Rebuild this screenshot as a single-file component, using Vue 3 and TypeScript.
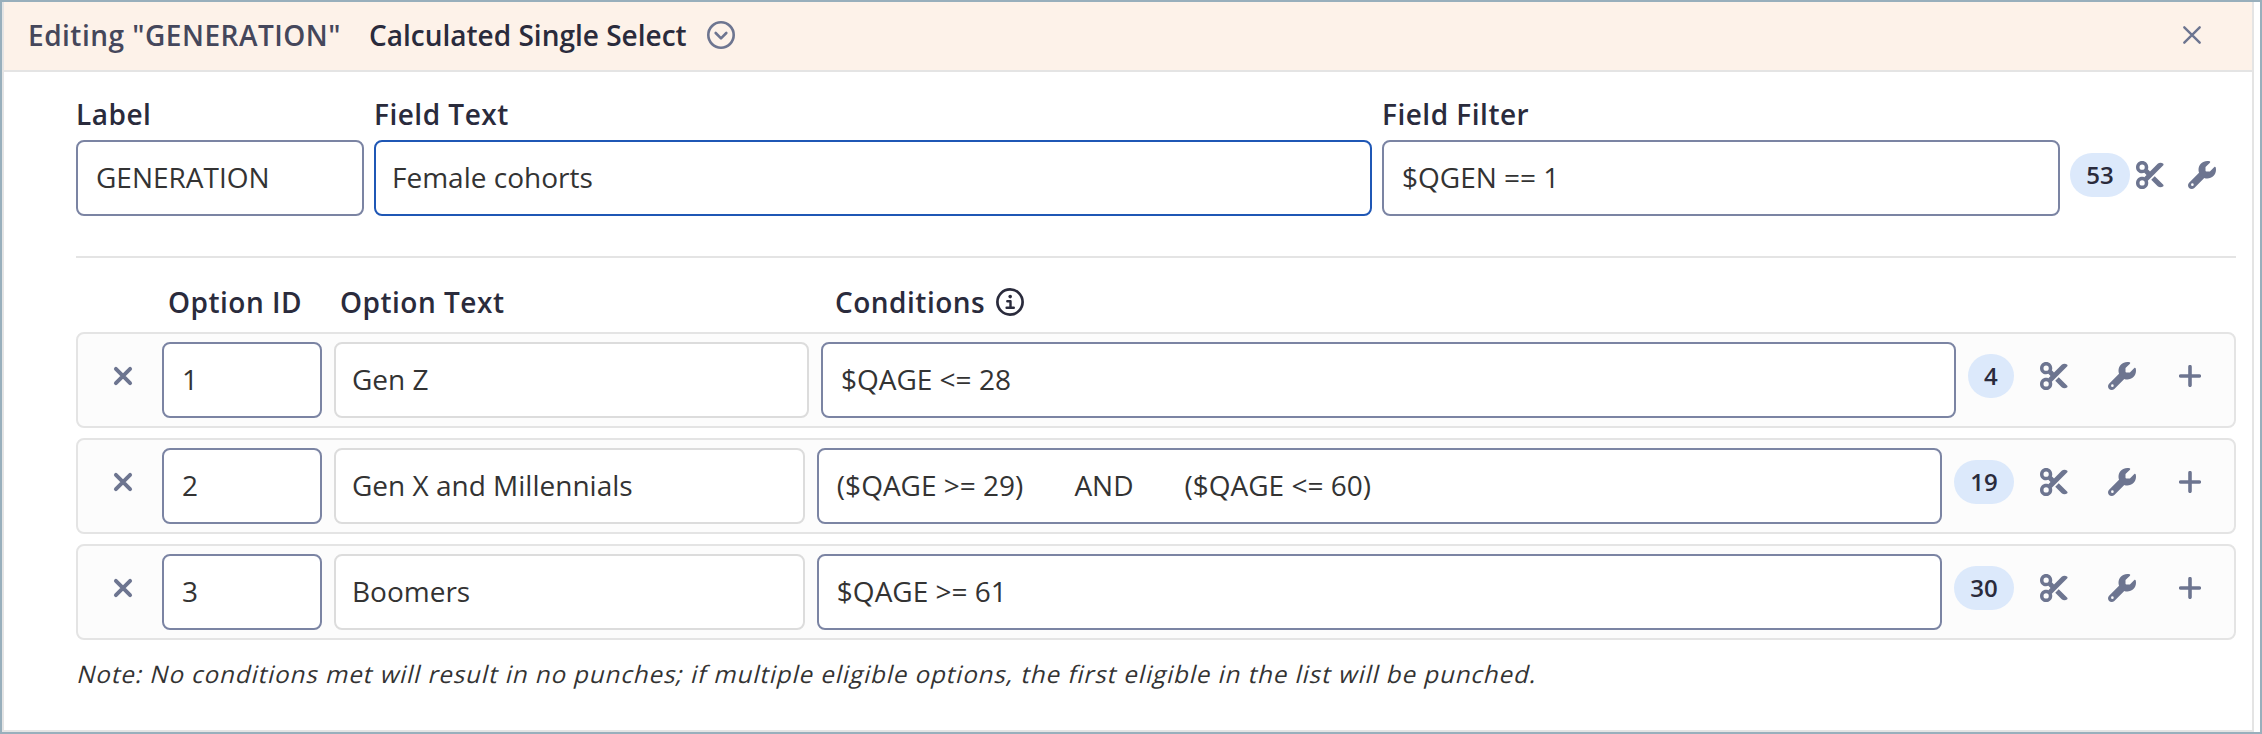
<script setup lang="ts">
import { ref } from 'vue'

interface OptionRow {
  id: string
  text: string
  clauses: string[]
  count: number
}

const label = ref('GENERATION')
const fieldText = ref('Female cohorts')
const fieldFilter = ref('$QGEN == 1')
const total = ref(53)

const options = ref<OptionRow[]>([
  { id: '1', text: 'Gen Z', clauses: ['$QAGE <= 28'], count: 4 },
  { id: '2', text: 'Gen X and Millennials', clauses: ['($QAGE >= 29)', 'AND', '($QAGE <= 60)'], count: 19 },
  { id: '3', text: 'Boomers', clauses: ['$QAGE >= 61'], count: 30 },
])

const scissors =
  'M256 192l-39.5-39.5c4.9-12.6 7.5-26.2 7.5-40.5C224 50.1 173.9 0 112 0S0 50.1 0 112s50.1 112 112 112c14.3 0 27.9-2.7 40.5-7.5L192 256l-39.5 39.5c-12.6-4.9-26.2-7.5-40.5-7.5C50.1 288 0 338.1 0 400s50.1 112 112 112s112-50.1 112-112c0-14.3-2.7-27.9-7.5-40.5L499.2 76.8c7.1-7.1 7.1-18.5 0-25.6c-28.3-28.3-74.1-28.3-102.4 0L256 192zm22.6 150.6L396.8 460.8c28.3 28.3 74.1 28.3 102.4 0c7.1-7.1 7.1-18.5 0-25.6L342.6 278.6l-64 64zM64 112a48 48 0 1 1 96 0a48 48 0 1 1-96 0zm48 240a48 48 0 1 1 0 96a48 48 0 1 1 0-96z'
const wrench =
  'M352 320c88.4 0 160-71.6 160-160c0-15.3-2.2-30.1-6.2-44.2c-3.1-10.8-16.4-13.2-24.3-5.3l-76.8 76.8c-3 3-7.1 4.7-11.3 4.7H336c-8.8 0-16-7.2-16-16V118.6c0-4.2 1.7-8.3 4.7-11.3l76.8-76.8c7.9-7.9 5.4-21.2-5.3-24.3C382.1 2.2 367.3 0 352 0C263.6 0 192 71.6 192 160c0 19.1 3.4 37.5 9.5 54.5L19.9 396.1C7.2 408.8 0 426.1 0 444.1C0 481.6 30.4 512 67.9 512c18 0 35.3-7.2 48-19.9L297.5 310.5c17 6.2 35.4 9.5 54.5 9.5zM80 408a24 24 0 1 1 0 48a24 24 0 1 1 0-48z'
</script>

<template>
  <div class="frame">
    <section class="panel">
      <header class="bar">
        <span class="editing">Editing "{{ label }}"</span>
        <span class="kind">Calculated Single Select</span>
        <svg class="chevron" width="28" height="28" viewBox="0 0 28 28">
          <circle cx="14" cy="14" r="12.7" />
          <path d="M8.7 12l5.3 5.4 5.3-5.4" />
        </svg>
        <svg class="close" width="20" height="20" viewBox="0 0 20 20">
          <path d="M2.3 2.3l15.4 15.4M17.7 2.3L2.3 17.7" />
        </svg>
      </header>

      <div class="body">
        <div class="fields">
          <div class="field field-label">
            <span class="caption">Label</span>
            <div class="box">{{ label }}</div>
          </div>
          <div class="field field-text">
            <span class="caption">Field Text</span>
            <div class="box snug focused">{{ fieldText }}</div>
          </div>
          <div class="field field-filter">
            <span class="caption">Field Filter</span>
            <div class="box">{{ fieldFilter }}</div>
          </div>
          <div class="field-actions">
            <span class="badge">{{ total }}</span>
            <svg class="glyph cut" width="28" height="28" viewBox="0 0 512 512"><path :d="scissors" /></svg>
            <svg class="glyph tool" width="28" height="28" viewBox="0 0 512 512"><path :d="wrench" /></svg>
          </div>
        </div>

        <div class="divider"></div>

        <div class="heads">
          <span class="caption">Option ID</span>
          <span class="caption">Option Text</span>
          <span class="caption conditions">
            Conditions
            <svg class="info" width="28" height="28" viewBox="0 0 28 28">
              <circle class="ring" cx="14" cy="14" r="12.6" />
              <circle cx="14.2" cy="8.6" r="1.8" />
              <path d="M11.3 13.2h3.2v6.4M10.6 19.8h7.2" />
            </svg>
          </span>
        </div>

        <div v-for="option in options" :key="option.id" class="option">
          <div class="remove">
            <svg width="20" height="20" viewBox="0 0 20 20">
              <path d="M2.9 2.9l14.2 14.2M17.1 2.9L2.9 17.1" />
            </svg>
          </div>
          <div class="box option-id">{{ option.id }}</div>
          <div class="option-inputs">
            <div class="box snug quiet">{{ option.text }}</div>
            <div class="box clauses">
              <span v-for="(clause, i) in option.clauses" :key="i">{{ clause }}</span>
            </div>
          </div>
          <div class="option-actions">
            <span class="badge">{{ option.count }}</span>
            <svg class="glyph cut" width="28" height="28" viewBox="0 0 512 512"><path :d="scissors" /></svg>
            <svg class="glyph tool" width="28" height="28" viewBox="0 0 512 512"><path :d="wrench" /></svg>
            <svg class="plus" width="22" height="22" viewBox="0 0 22 22"><path d="M11 1.7v18.6M1.7 11h18.6" /></svg>
          </div>
        </div>

        <p class="note">
          Note: No conditions met will result in no punches; if multiple eligible options, the first eligible in the list will be punched.
        </p>
      </div>
    </section>
  </div>
</template>

<style>
body {
  margin: 0;
  background: #fff;
}
</style>

<style scoped>
.frame {
  box-sizing: border-box;
  width: 2262px;
  height: 734px;
  padding-right: 6px;
  border: 2px solid #98afbc;
  background: #fff;
  font-family: 'Open Sans', 'Noto Sans', sans-serif;
  font-size: 28px;
  line-height: 38px;
  color: #333;
  overflow: hidden;
}
.panel {
  box-sizing: border-box;
  height: 100%;
  border: 2px solid #e4e4e4;
  border-top: 0;
}
.bar {
  display: flex;
  align-items: center;
  height: 68px;
  padding: 0 50px 0 24px;
  border-bottom: 2px solid #e4e4e4;
  background: #fdf2e9;
  font-weight: 600;
}
.editing {
  width: 341px;
  color: #45475b;
  letter-spacing: 0.5px;
  margin-top: -2px;
}
.kind {
  width: 338px;
  color: #2a2b3c;
  margin-top: -2px;
}
.chevron,
.close {
  fill: none;
  stroke: #6d7590;
  stroke-width: 2.6;
  stroke-linecap: round;
  stroke-linejoin: round;
  margin-top: -2px;
}
.close {
  margin-left: auto;
  stroke-width: 2.4;
}
.body {
  padding: 23px 16px 0 72px;
}
.fields {
  display: flex;
  gap: 10px;
}
.field {
  display: flex;
  flex-direction: column;
  gap: 7px;
}
.field-label {
  width: 288px;
}
.field-text {
  width: 998px;
}
.field-filter {
  width: 678px;
}
.caption {
  font-weight: 600;
  letter-spacing: 0.5px;
  color: #2a2b3c;
}
.box {
  box-sizing: border-box;
  display: flex;
  align-items: center;
  height: 76px;
  padding: 0 18px 2px;
  border: 2px solid #7b84a3;
  border-radius: 8px;
  background: #fff;
}
.snug {
  padding-left: 16px;
}
.focused {
  border-color: #1f57b5;
}
.quiet {
  border-color: #dcdcdc;
}
.field-actions {
  display: flex;
  align-items: center;
  height: 76px;
  margin-top: 42px;
}
.badge {
  height: 44px;
  padding: 0 16.2px;
  border-radius: 22px;
  background: #dce9fb;
  color: #2a2b3c;
  font-size: 24px;
  font-weight: 600;
  line-height: 43px;
}
.glyph {
  fill: #6d7590;
}
.field-actions .cut {
  margin-left: 6px;
}
.field-actions .tool {
  margin-left: 24px;
}
.divider {
  height: 2px;
  margin: 40px 0 25px;
  background: #e4e4e4;
}
.heads {
  display: grid;
  grid-template-columns: 172px 495px 1fr;
  height: 38px;
  padding-left: 92px;
  margin-bottom: 11px;
}
.conditions {
  display: flex;
  align-items: center;
  gap: 11px;
}
.info {
  fill: #2a2b3c;
}
.info .ring,
.info path {
  fill: none;
  stroke: #2a2b3c;
  stroke-width: 2.7;
}
.info path {
  stroke-width: 2.4;
  stroke-linejoin: round;
  stroke-linecap: round;
}
.option {
  box-sizing: border-box;
  display: flex;
  height: 96px;
  padding: 8px 33px 8px 0;
  margin-bottom: 10px;
  border: 2px solid #e4e4e4;
  border-radius: 8px;
  background: #fcfcfc;
}
.remove {
  display: flex;
  align-items: center;
  box-sizing: border-box;
  width: 84px;
  height: 68px;
  padding-left: 34.5px;
}
.remove path,
.plus path {
  fill: none;
  stroke: #6d7590;
  stroke-width: 3.6;
  stroke-linecap: round;
}
.remove path {
  stroke-width: 3.9;
}
.option-id {
  width: 160px;
  margin-right: 12px;
}
.option-inputs {
  flex: 1;
  display: grid;
  grid-template-columns: 295fr 705fr;
  gap: 12px;
  margin-right: 12px;
}
.clauses {
  gap: 51px;
}
.option-actions {
  display: flex;
  align-items: center;
  height: 68px;
}
.option-actions .cut {
  margin-left: 26px;
}
.option-actions .tool {
  margin-left: 40px;
}
.plus {
  margin-left: 43px;
}
.note {
  margin: 17px 0 0;
  font-size: 24px;
  line-height: 33px;
  letter-spacing: 1px;
  white-space: nowrap;
  transform: skewX(-14deg);
  transform-origin: 0 26px;
}
</style>
